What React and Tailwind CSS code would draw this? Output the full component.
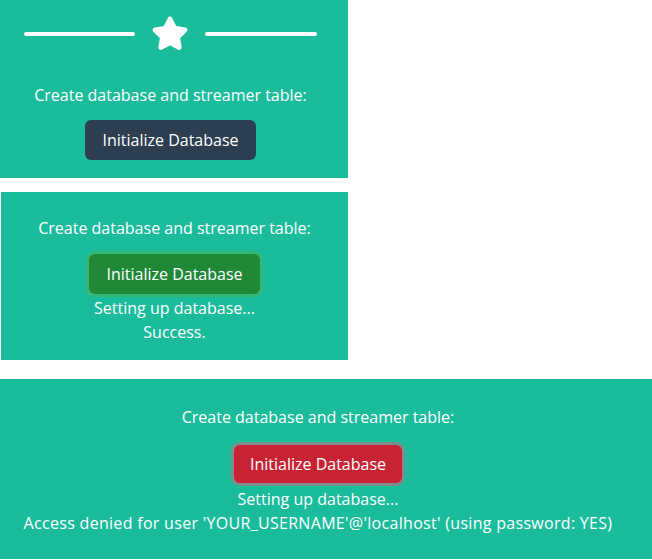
import React from 'react'
import { Star } from 'lucide-react'

function Panel({ className = '', children }) {
  return <div className={`bg-[#1abc9c] text-white text-center ${className}`}>{children}</div>
}

export default function App() {
  return (
    <div className="bg-white min-h-[560px] text-[16px] font-medium font-['Comic_Sans_MS','Open_Sans',sans-serif]">
      <Panel className="w-[348px] pt-[15px] pb-[18px] pr-[7px]">
        <div className="flex items-center justify-center gap-[16px]">
          <div className="w-[111px] h-1 rounded-full bg-white" />
          <Star size={38} className="fill-white text-white" strokeWidth={2} />
          <div className="w-[112px] h-1 rounded-full bg-white" />
        </div>
        <p className="mt-[30px] leading-6">Create database and streamer table:</p>
        <button className="mt-[13px] h-10 w-[171px] rounded-md bg-[#2c3e50] text-white">Initialize Database</button>
      </Panel>

      <Panel className="mt-[14px] ml-px w-[347px] pt-6 pb-4">
        <p className="leading-6">Create database and streamer table:</p>
        <button className="mt-[14px] h-10 w-[171px] rounded-md bg-[#218838] text-white ring-[3px] ring-[#48b461]/60">Initialize Database</button>
        <p className="mt-0.5 leading-6">Setting up database...</p>
        <p className="leading-6">Success.</p>
      </Panel>

      <Panel className="mt-[19px] w-[652px] pt-[26px] pb-6 pr-4">
        <p className="leading-6">Create database and streamer table:</p>
        <button className="mt-4 h-[38px] w-[168px] rounded-md bg-[#c82333] text-white ring-[3px] ring-[#7f8c8d]">Initialize Database</button>
        <p className="mt-1 leading-6">Setting up database...</p>
        <p className="leading-6 tracking-[0.3px]">Access denied for user 'YOUR_USERNAME'@'localhost' (using password: YES)</p>
      </Panel>
    </div>
  )
}
